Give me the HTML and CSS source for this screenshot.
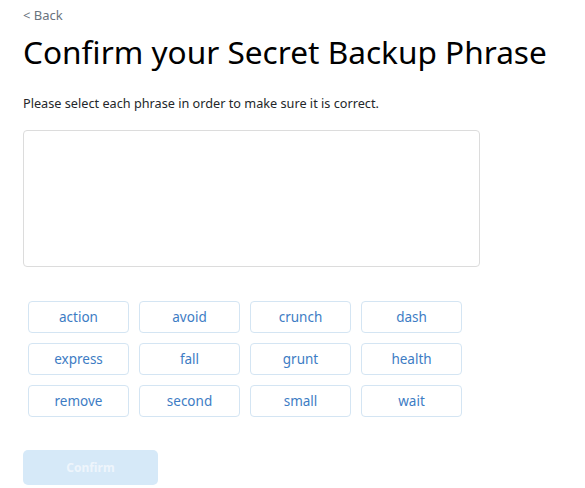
FILE: index.html
```html
<!DOCTYPE html>
<html lang="en">

<head>
    <meta charset="UTF-8">
    <meta name="viewport" content="width=device-width, initial-scale=1.0">
    <title>Confirm your Secret Backup Phrase</title>
    <link rel="stylesheet" href="styles.css">
</head>

<body>
    <div class="page">
        <a class="back" href="#">&lt; Back</a>
        <h1 class="title">Confirm your Secret Backup Phrase</h1>
        <p class="subtitle">Please select each phrase in order to make sure it is correct.</p>

        <div class="selected-box"></div>

        <div class="words">
            <button class="word">action</button>
            <button class="word">avoid</button>
            <button class="word">crunch</button>
            <button class="word">dash</button>
            <button class="word">express</button>
            <button class="word">fall</button>
            <button class="word">grunt</button>
            <button class="word">health</button>
            <button class="word">remove</button>
            <button class="word">second</button>
            <button class="word">small</button>
            <button class="word">wait</button>
        </div>

        <button class="confirm" disabled>Confirm</button>
    </div>
</body>

</html>
```

FILE: styles.css
```css
body {
    margin: 0;
    background-color: #ffffff;
    font-family: "Noto Sans", Lato, sans-serif;
    color: #24272a;
}

.page {
    padding: 6px 0 0 23px;
}

.back {
    display: block;
    font-size: 13px;
    line-height: 18px;
    color: #6a737d;
    text-decoration: none;
}

.title {
    margin: 8px 0 0 0;
    font-size: 31.6px;
    font-weight: 400;
    line-height: 40px;
    color: #000000;
}

.subtitle {
    margin: 22px 0 0 0;
    font-size: 12.7px;
    line-height: 18px;
    color: #24272a;
}

.selected-box {
    width: 455px;
    height: 135px;
    margin-top: 18px;
    border: 1px solid #dcdcdc;
    border-radius: 4px;
}

.words {
    display: grid;
    grid-template-columns: repeat(4, 101px);
    gap: 10px;
    margin: 34px 0 0 5px;
}

.word {
    height: 32px;
    padding: 0;
    border: 1px solid #d4e5f3;
    border-radius: 4px;
    background-color: #ffffff;
    color: #3d7cc4;
    font-family: "Noto Sans", Lato, sans-serif;
    font-size: 13.5px;
    cursor: pointer;
}

.confirm {
    display: block;
    width: 135px;
    height: 35px;
    margin-top: 33px;
    border: none;
    border-radius: 5px;
    background-color: #d6e9f8;
    color: #eef5fc;
    font-family: "Noto Sans", Lato, sans-serif;
    font-size: 12px;
    font-weight: 700;
}
```
